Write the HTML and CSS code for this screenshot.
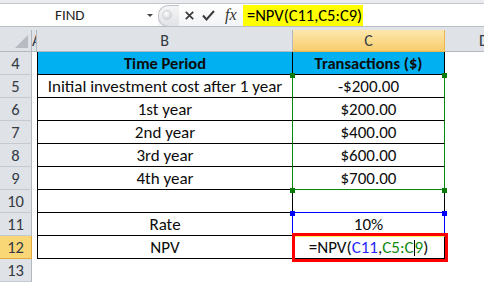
FILE: index.html
```html
<!DOCTYPE html>
<html>
<head>
<meta charset="utf-8">
<link rel="stylesheet" href="styles.css">
</head>
<body>
<div class="fbar">
  <div class="namebox">
    <span class="name">FIND</span>
    <span class="drop"></span>
  </div>
  <div class="btns">
    <span class="dot"></span>
    <svg class="ico x" width="9" height="9" viewBox="0 0 9 9"><path d="M0.8 0.8 L8.2 8.2 M8.2 0.8 L0.8 8.2" stroke="#3a3a3a" stroke-width="1.7" fill="none"/></svg>
    <svg class="ico chk" width="13" height="11" viewBox="0 0 13 11"><path d="M1 5.5 L4.5 9.5 L12 1" stroke="#3a3a3a" stroke-width="2" fill="none"/></svg>
    <span class="fx">fx</span>
  </div>
  <div class="formula"><span class="hl">=NPV(C11,C5:C9)</span></div>
</div>
<div class="sheet">
  <div class="corner"><span class="tri"></span></div>
  <div class="ch cha"><span>A</span></div>
  <div class="ch">B</div>
  <div class="ch sel">C</div>
  <div class="ch chd">D</div>

  <div class="rh">4</div><div class="ca"></div><div class="c b hd">Time Period</div><div class="c cc hd">Transactions ($)</div><div class="cd"></div>
  <div class="rh">5</div><div class="ca"></div><div class="c b">Initial investment cost after 1 year</div><div class="c cc g">-$200.00</div><div class="cd"></div>
  <div class="rh">6</div><div class="ca"></div><div class="c b">1st year</div><div class="c cc g">$200.00</div><div class="cd"></div>
  <div class="rh">7</div><div class="ca"></div><div class="c b">2nd year</div><div class="c cc g">$400.00</div><div class="cd"></div>
  <div class="rh">8</div><div class="ca"></div><div class="c b">3rd year</div><div class="c cc g">$600.00</div><div class="cd"></div>
  <div class="rh">9</div><div class="ca"></div><div class="c b">4th year</div><div class="c cc g gb">$700.00</div><div class="cd"></div>
  <div class="rh">10</div><div class="ca"></div><div class="c b"></div><div class="c cc"></div><div class="cd"></div>
  <div class="rh">11</div><div class="ca"></div><div class="c b">Rate</div><div class="c cc bl">10%</div><div class="cd"></div>
  <div class="rh rsel">12</div><div class="ca"></div><div class="c b">NPV</div><div class="c cc edit"><span class="et">=NPV(<span class="rb">C11</span>,<span class="rg">C5:C</span><span class="caret"></span><span class="rg">9</span>)</span></div><div class="cd"></div>
  <div class="rh">13</div><div class="ca"></div><div class="e"></div><div class="e"></div><div class="cd"></div>

  <span class="hdl gh h1"></span>
  <span class="hdl gh h2"></span>
  <span class="hdl gh h3"></span>
  <span class="hdl gh h4"></span>
  <span class="hdl bh h5"></span>
  <span class="hdl bh h6"></span>
  <span class="redbox"></span>
</div>
</body>
</html>
```
FILE: styles.css
```css
html, body {
  margin: 0;
  padding: 0;
  background: #ffffff;
  width: 484px;
  height: 287px;
  overflow: hidden;
  font-family: Carlito, Lato, "Liberation Sans", sans-serif;
}
.fbar {
  height: 30px;
  box-sizing: border-box;
  background: #dfe2e6;
  border-top: 3px solid #e9ebee;
  display: flex;
  align-items: flex-start;
}
.namebox {
  width: 158px;
  height: 24px;
  box-sizing: border-box;
  background: #fff;
  border-top: 1px solid #c3c8ce;
  border-bottom: 1px solid #b9bec5;
  display: flex;
  align-items: center;
  position: relative;
}
.name {
  margin-left: 55px;
  font-size: 15px;
  color: #1e1e1e;
}
.drop {
  position: absolute;
  left: 147px;
  top: 10px;
  width: 0;
  height: 0;
  border-left: 3px solid transparent;
  border-right: 3px solid transparent;
  border-top: 3px solid #444;
}
.btns {
  width: 85px;
  height: 24px;
  box-sizing: border-box;
  background: linear-gradient(#ffffff, #f3f4f6);
  border-top: 1px solid #c3c8ce;
  border-bottom: 1px solid #b9bec5;
  display: flex;
  align-items: center;
  position: relative;
}
.btns::before {
  content: "";
  position: absolute;
  left: 0;
  top: 1px;
  width: 20px;
  height: 20px;
  border-radius: 10px 0 0 10px;
  border: 1px solid #bfc4ca;
  border-right: none;
  background: linear-gradient(#f4f5f6, #e1e3e6);
}
.dot {
  position: relative;
  margin-left: 4px;
  width: 8px;
  height: 8px;
  border-radius: 50%;
  background: radial-gradient(circle at 40% 35%, #ffffff, #c4c8cd);
  border: 1px solid #d0d3d7;
}
.ico { display: block; }
.x { margin-left: 13px; }
.chk { margin-left: 8px; }
.fx {
  margin-left: 10px;
  font-family: "Liberation Serif", serif;
  font-style: italic;
  font-size: 16px;
  color: #333;
}
.formula {
  flex: 1;
  height: 24px;
  box-sizing: border-box;
  background: #fff;
  border-top: 1px solid #c3c8ce;
  border-bottom: 1px solid #b9bec5;
  padding-top: 1px;
}
.hl {
  display: inline-block;
  background: #ffff00;
  height: 21px;
  line-height: 21px;
  width: 116px;
  padding-left: 4px;
  font-size: 16.5px;
  color: #000;
}
.sheet {
  position: relative;
  display: grid;
  grid-template-columns: 32px 5px 256px 152px 76px;
  grid-template-rows: 22px repeat(10, 23px);
  font-size: 17px;
}
.corner {
  background: #dfe2e6;
  border-right: 1px solid #b4b9c0;
  border-bottom: 1px solid #b4b9c0;
  position: relative;
}
.tri {
  position: absolute;
  right: 3px;
  bottom: 3px;
  width: 0;
  height: 0;
  border-left: 13px solid transparent;
  border-bottom: 13px solid #b8bcc2;
}
.ch {
  background: #dfe2e6;
  border-right: 1px solid #b4b9c0;
  border-bottom: 1px solid #b4b9c0;
  display: flex;
  align-items: center;
  justify-content: center;
  color: #333a44;
  overflow: hidden;
  white-space: nowrap;
  font-size: 16px;
}
.cha { justify-content: flex-start; }
.cha span { margin-left: 0px; }
.ch.sel {
  background: linear-gradient(#fde7ae, #f8cd6c);
  border-right: 1px solid #efb54a;
  border-bottom: 1px solid #efb54a;
}
.chd {
  border-right: none;
  justify-content: flex-start;
  padding-left: 34px;
}
.rh {
  background: #dfe2e6;
  border-right: 1px solid #b4b9c0;
  border-bottom: 1px solid #c5cad0;
  display: flex;
  align-items: center;
  justify-content: center;
  color: #333a44;
  font-size: 16.5px;
}
.rh.rsel {
  background: #f9d776;
  border-right: 1px solid #e6a73c;
  border-bottom: 1px solid #e6a73c;
}
.ca { background: #fff; }
.cd { background: #fff; }
.e { background: #fff; }
.c {
  box-sizing: border-box;
  border-right: 1px solid #000;
  border-bottom: 1px solid #000;
  display: flex;
  align-items: center;
  justify-content: center;
  color: #0c0c0c;
  white-space: nowrap;
  overflow: hidden;
}
.c.b { border-left: 1px solid #000; }
.c.hd {
  background: #00b0f0;
  font-weight: bold;
  font-size: 16.5px;
}
.c.g {
  border-left: 1px solid #0a8a0a;
  border-right: 1px solid #0a8a0a;
  margin-left: -1px;
}
.c.gb { border-bottom: 1px solid #0a8a0a; }
.c.bl {
  border: 1px solid #0000ff;
  margin-left: -1px;
  margin-top: -1px;
}
.c.edit {
  border-top: 1px solid #f7f36a;
}
.et { position: relative; }
.rb { color: #2525ff; }
.rg { color: #118a11; }
.caret {
  display: inline-block;
  width: 1px;
  height: 16px;
  background: #000;
  vertical-align: -3px;
}
.hdl {
  position: absolute;
  width: 5px;
  height: 5px;
}
.gh { background: #0a7a0a; }
.bh { background: #0000ff; }
.h1 { left: 290px; top: 43px; }
.h2 { left: 442px; top: 43px; }
.h3 { left: 290px; top: 158px; }
.h4 { left: 442px; top: 158px; }
.h5 { left: 290px; top: 181px; }
.h6 { left: 442px; top: 181px; }
.redbox {
  position: absolute;
  left: 292px;
  top: 203px;
  width: 150px;
  height: 23px;
  border: 3px solid #ff0000;
}
```
